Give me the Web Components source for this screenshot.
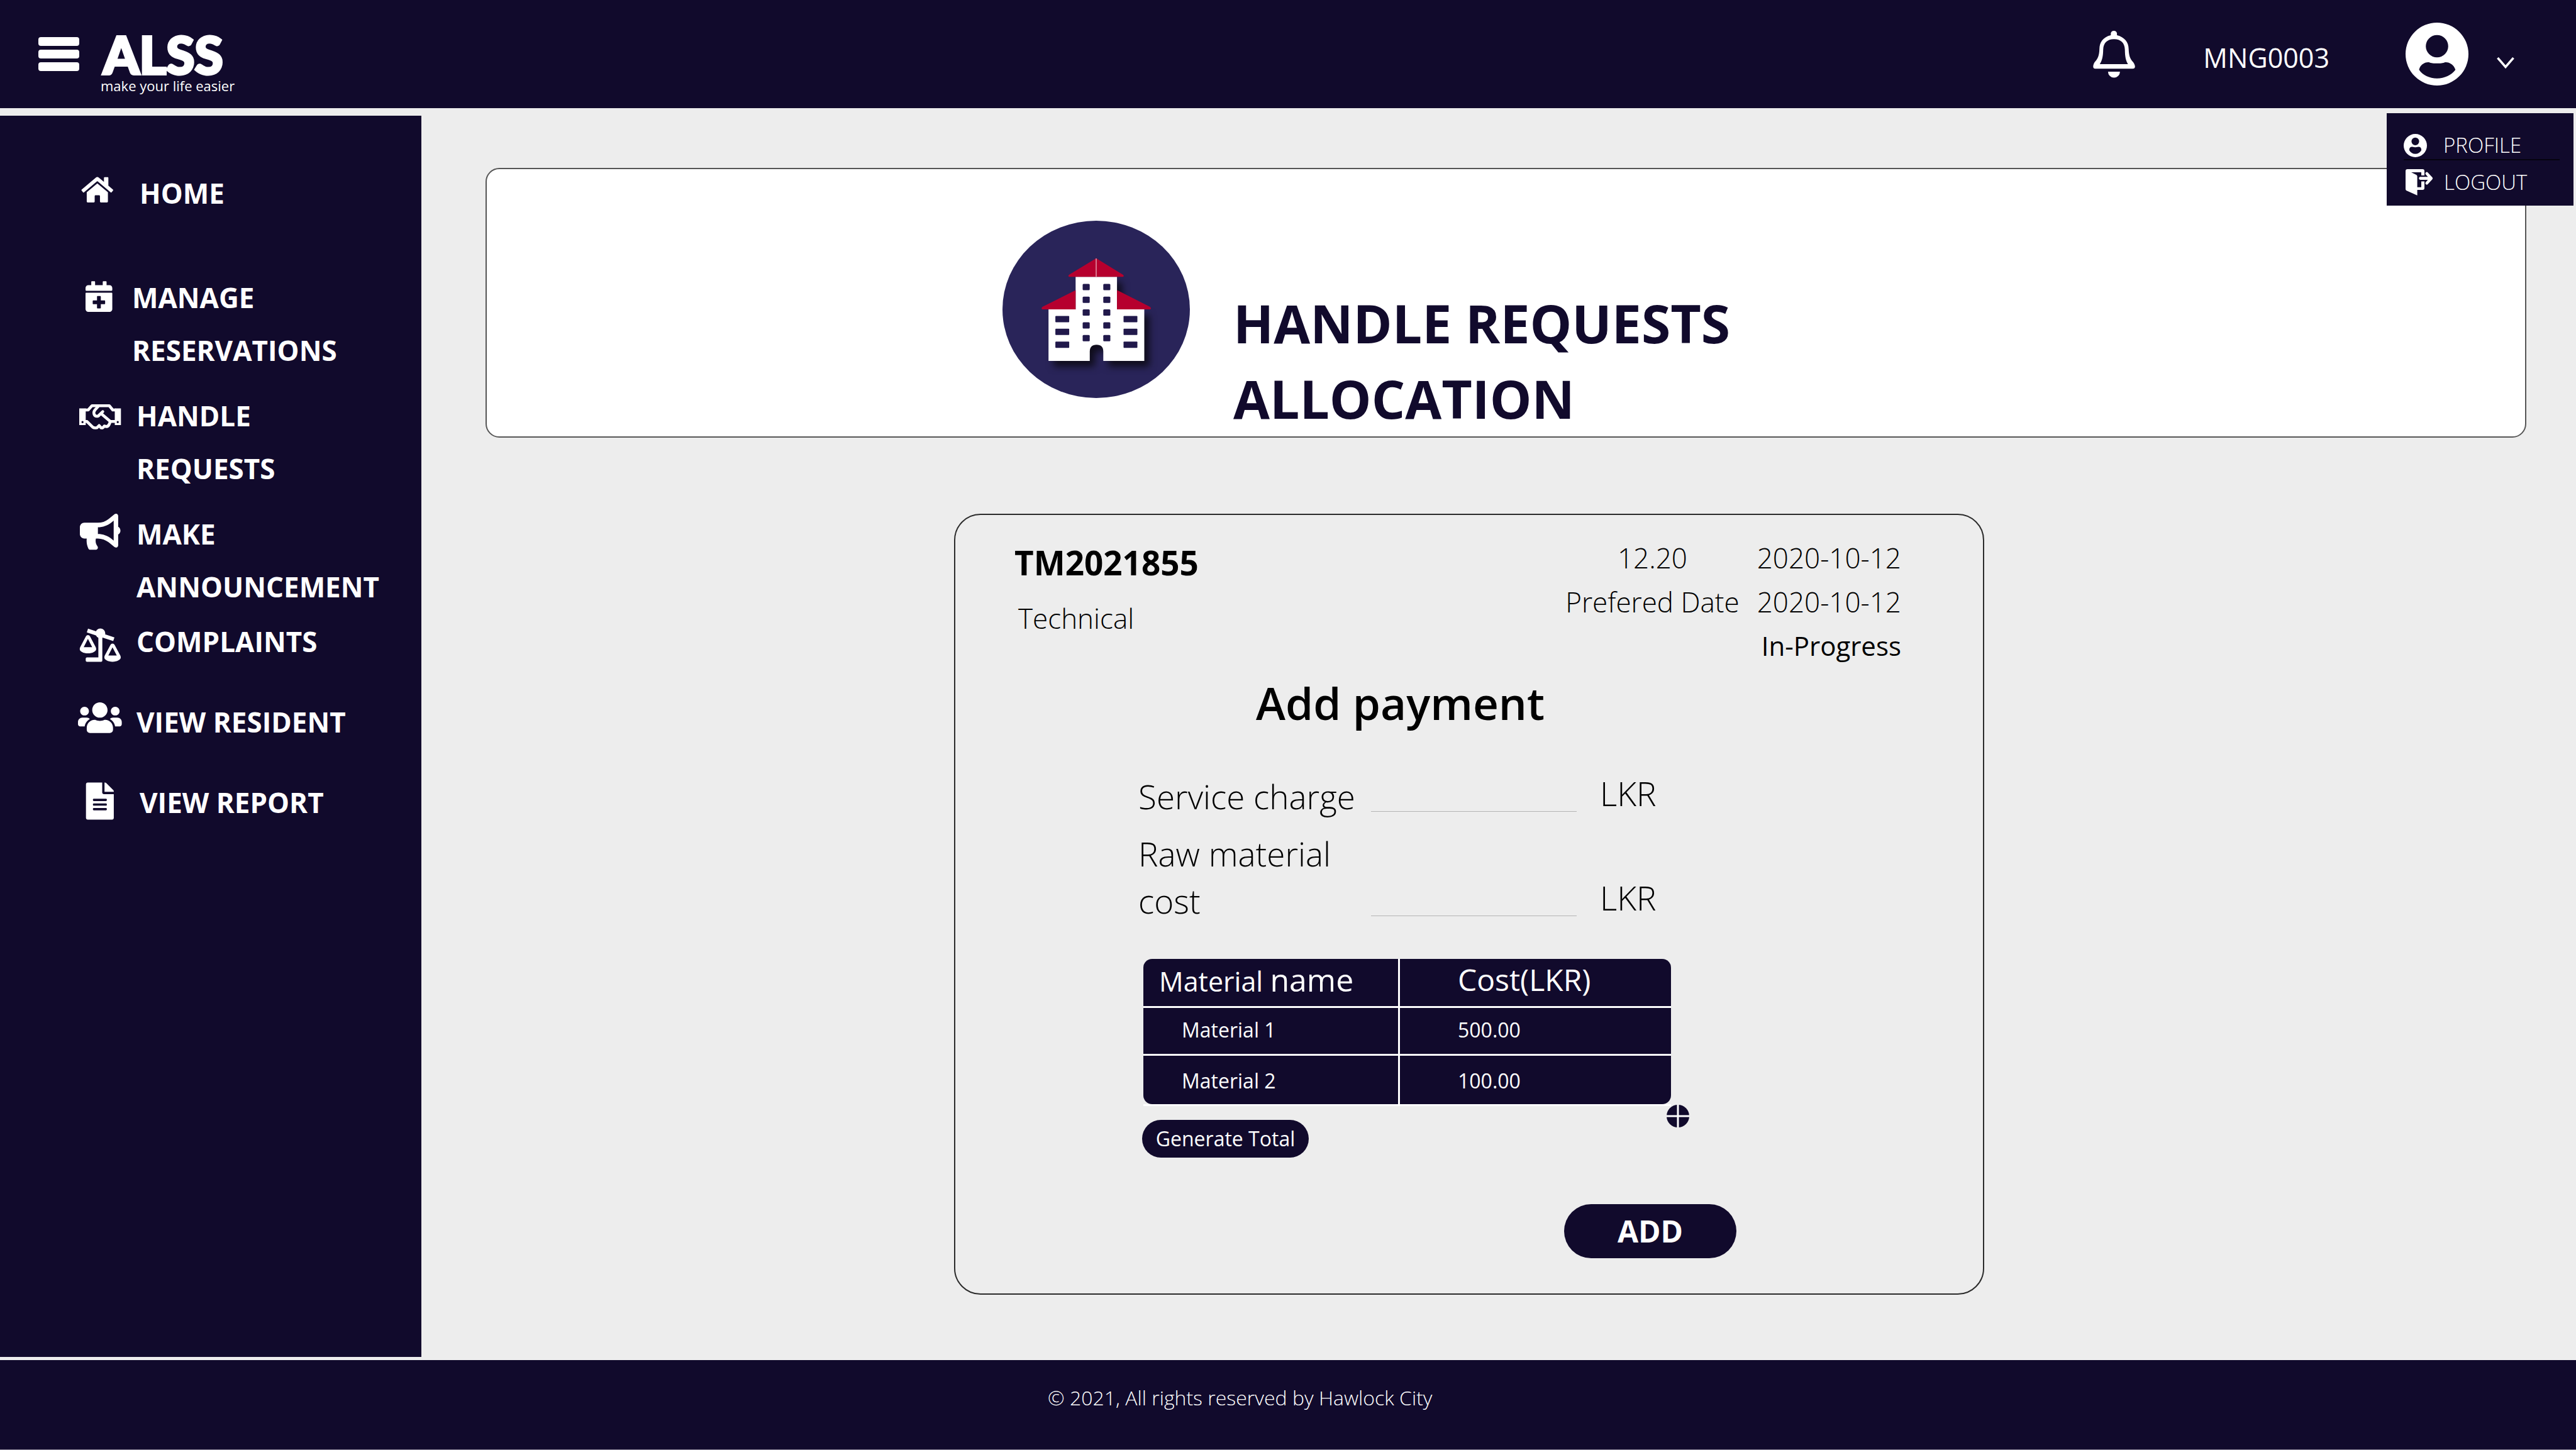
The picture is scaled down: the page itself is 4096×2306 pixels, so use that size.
<!DOCTYPE html>
<html lang="en">
<head>
<meta charset="utf-8">
<meta name="viewport" content="width=device-width, initial-scale=1">
<title>ALSS - Handle Requests</title>
<style>
  :root {
    --navy: #110a2c;
    --canvas: #ededed;
    --line: #2b2b2b;
    --light: 350;
    font-family: "Open Sans", "Noto Sans", sans-serif;
  }
  body { margin: 0; background: var(--canvas); color: #000; }
</style>
</head>
<body>
<alss-app></alss-app>

<script>
const define = (name, html) => {
  const tpl = document.createElement('template');
  tpl.innerHTML = html;
  customElements.define(name, class extends HTMLElement {
    constructor() {
      super();
      this.attachShadow({ mode: 'open' }).append(tpl.content.cloneNode(true));
    }
  });
};

/* Icons: every sidebar icon shares a 70x84 canvas, one text line high. */
const ICONS = {
  menu: [65, 54, '<rect width="65" height="14" rx="4"/><rect y="20" width="65" height="14" rx="4"/><rect y="40" width="65" height="14" rx="4"/>'],
  bell: [67, 76, '<path fill-rule="evenodd" d="M28.3 8V5a5 5 0 0 1 9.8 0v3C50 11 56.7 19 56.7 30c.3 10 2.300 16 7.300 21 2 3 2.800 5 2.800 7s-1.300 3.300-3.800 3.300H3.500C1.500 61.300.300 60 .300 58s.500-4 2.200-7C7.500 46 10 40 10.200 30 10.400 19 16 11 28.300 8zM33.400 14.300C23 14.300 16.500 20 16.200 31 16 42 14.500 48 10.800 54h44.800C52 48 50.900 42 50.700 31 50.400 20 44 14.300 33.400 14.300z"/><path d="M23.900 66h19a9.500 9.500 0 0 1-19 0z"/>'],
  user: [100, 100, '<path fill-rule="evenodd" d="M50 0a50 50 0 1 1 0 100A50 50 0 1 1 50 0zM50 19.700a17.800 17.800 0 1 0 0 35.600 17.800 17.800 0 1 0 0-35.600zM21.500 75C27 83.500 38 88.700 50 88.700S73 83.500 79.300 75C77 67 69 62 62 63.200c-4 2.200-20 2.200-24 0C31 62 23 67 21.500 75z"/>'],
  profile: [37, 37, '<path transform="scale(.37)" fill-rule="evenodd" d="M50 0a50 50 0 1 1 0 100A50 50 0 1 1 50 0zM50 15.500a16.500 16.500 0 1 0 0 33 16.500 16.500 0 1 0 0-33zM24 70c6 10 15 16 26 16s20-6 26-16c0-12-6-15-14-14.500-7 2.500-17 2.500-24 0C30 55 24 58 24 70z"/>'],
  chevron: [28, 18, '<path d="M1.500 1L14 15.500 26.500 1" fill="none" stroke="currentColor" stroke-width="3.500"/>'],
  logout: [44, 42, '<path d="M3 0h24q3 0 3 3v7h-5V5H9l8 4q1.600.800 1.600 2.600v17.200H25V19.400h5v10.500q0 3-3 3h-8.400v8.800L1.200 34Q0 33 0 31.500V3Q0 0 3 0z"/><path d="M23.500 14.600h17M33.800 7l7 7.600-7 7.600" fill="none" stroke="currentColor" stroke-width="4.600" stroke-linecap="round" stroke-linejoin="round"/>'],
  home: [70, 84, '<path transform="translate(5.500 13.800) scale(.0877 .09)" d="M280.370 148.260L96 300.110V464a16 16 0 0 0 16 16l112.060-.290a16 16 0 0 0 15.920-16V368a16 16 0 0 1 16-16h64a16 16 0 0 1 16 16v95.640a16 16 0 0 0 16 16.050L464 480a16 16 0 0 0 16-16V300L295.670 148.260a12.190 12.190 0 0 0-15.300 0zM571.600 251.470L488 182.560V44.050a12 12 0 0 0-12-12h-56a12 12 0 0 0-12 12v72.610L318.470 43a48 48 0 0 0-61 0L4.340 251.470a12 12 0 0 0-1.600 16.900l25.500 31A12 12 0 0 0 45.150 301l235.220-193.740a12.190 12.190 0 0 1 15.300 0L530.900 301a12 12 0 0 0 16.900-1.600l25.500-31a12 12 0 0 0-1.700-16.930z"/>'],
  calendar: [70, 84, '<path transform="translate(12 16.300) scale(.095)" d="M436 160H12c-6.600 0-12-5.400-12-12v-36c0-26.500 21.500-48 48-48h48V12c0-6.600 5.400-12 12-12h40c6.600 0 12 5.400 12 12v52h128V12c0-6.600 5.400-12 12-12h40c6.600 0 12 5.400 12 12v52h48c26.500 0 48 21.500 48 48v36c0 6.600-5.400 12-12 12zM12 192h424c6.600 0 12 5.400 12 12v260c0 26.500-21.500 48-48 48H48c-26.500 0-48-21.500-48-48V204c0-6.600 5.400-12 12-12zm316 140c0-6.600-5.400-12-12-12h-60v-60c0-6.600-5.400-12-12-12h-40c-6.600 0-12 5.400-12 12v60h-60c-6.600 0-12 5.400-12 12v40c0 6.600 5.400 12 12 12h60v60c0 6.600 5.400 12 12 12h40c6.600 0 12-5.400 12-12v-60h60c6.600 0 12-5.400 12-12v-40z"/>'],
  handshake: [70, 84, '<path fill-rule="evenodd" d="M2 30.400h10.300V57H2zM7.200 50.600a1.700 1.700 0 1 0 0 3.400 1.700 1.700 0 1 0 0-3.400zM58.500 30.400h9.800V57h-9.800zM63.200 50.600a1.700 1.700 0 1 0 0 3.400 1.700 1.700 0 1 0 0-3.400z"/><g fill="none" stroke="currentColor" stroke-width="4.600" stroke-linejoin="round"><path d="M11 33h5.200l6-6.700h27.600l5.500 6.700H60M11 51.300h3.300l9.200 9q2 1.500 6.500 1l3.600-3.500 3 3.500q3 1 5.300-2.800l2.500.800q3.500.500 5.400-3.800l1.700-4.200H60"/><path d="M32 27.500l-4.800 5.200q-2.800 3.600-1.500 7.300 2 4.200 6.600 2.500l7.100-6.800M36.500 38.500l14.900 12.800" stroke-linecap="round"/></g>'],
  bullhorn: [70, 84, '<path transform="translate(3 10) scale(.112)" d="M576 240c0-23.630-12.950-44.040-32-55.120V32.010C544 23.260 537.020 0 512 0c-7.120 0-14.190 2.380-19.980 7.020l-85.030 68.030C364.280 109.190 310.660 128 256 128H64c-35.350 0-64 28.650-64 64v96c0 35.350 28.650 64 64 64h33.700c-1.390 10.480-2.180 21.140-2.180 32 0 39.770 9.260 77.350 25.560 110.940 5.190 10.690 16.520 17.060 28.400 17.060h74.280c26.050 0 41.690-29.840 25.900-50.560-16.400-21.520-26.150-48.360-26.150-77.440 0-11.110 1.620-21.790 4.410-32H256c54.660 0 108.280 18.810 150.980 52.950l85.030 68.030a32.023 32.023 0 0 0 19.980 7.020c24.920 0 32-22.780 32-32V295.130C563.050 284.040 576 263.630 576 240zm-96 141.420l-33.050-26.440C392.950 311.780 325.120 288 256 288v-96c69.120 0 136.950-23.780 190.950-66.980L480 98.580v282.840z"/>'],
  scales: [70, 84, '<path d="M15 24.700l42 13.900" stroke="currentColor" stroke-width="6.200"/><circle cx="35.600" cy="29.300" r="7.800"/><path d="M32.400 29h6.300v43.500q0 2-2 2H14.300q-2 0-2-2v-3q0-2 2-2h18.100z"/><g fill-rule="evenodd"><path d="M15.800 32q2.200 0 3.300 2l9.100 17.200q.700 1.500.700 3c0 3.800-5.900 6.800-13.100 6.800s-13-3-13-6.800q0-1.500.700-3L12.600 34q1-2 3.200-2zM15.800 38L9.100 51.200h13.500z"/><path transform="translate(39.100 13.400)" d="M15.800 32q2.200 0 3.300 2l9.100 17.200q.700 1.500.700 3c0 3.800-5.900 6.800-13.100 6.800s-13-3-13-6.800q0-1.500.700-3L12.600 34q1-2 3.200-2zM15.800 38L9.100 51.200h13.500z"/></g>'],
  users: [70, 84, '<path transform="translate(0 7.500) scale(.1088)" d="M96 224c35.300 0 64-28.700 64-64s-28.700-64-64-64-64 28.700-64 64 28.700 64 64 64zm448 0c35.300 0 64-28.700 64-64s-28.700-64-64-64-64 28.700-64 64 28.700 64 64 64zm32 32h-64c-17.600 0-33.500 7.100-45.100 18.600 40.300 22.100 68.900 62 75.100 109.400h66c17.700 0 32-14.300 32-32v-32c0-35.300-28.700-64-64-64zm-256 0c61.900 0 112-50.100 112-112S381.900 32 320 32 208 82.100 208 144s50.100 112 112 112zm76.800 32h-8.300c-20.800 10-43.900 16-68.500 16s-47.600-6-68.500-16h-8.300C179.600 288 128 339.600 128 403.200V432c0 26.500 21.500 48 48 48h288c26.500 0 48-21.500 48-48v-28.800c0-63.600-51.600-115.200-115.200-115.200zm-223.700-13.400C161.500 263.100 145.600 256 128 256H64c-35.300 0-64 28.700-64 64v32c0 17.700 14.300 32 32 32h65.900c6.300-47.400 34.900-87.300 75.200-109.400z"/>'],
  file: [70, 84, '<path transform="translate(12.700 10.500) scale(.1152)" d="M224 136V0H24C10.700 0 0 10.700 0 24v464c0 13.300 10.700 24 24 24h336c13.300 0 24-10.700 24-24V160H248c-13.200 0-24-10.800-24-24zm64 236c0 6.600-5.400 12-12 12H108c-6.600 0-12-5.400-12-12v-8c0-6.600 5.400-12 12-12h168c6.600 0 12 5.400 12 12v8zm0-64c0 6.600-5.400 12-12 12H108c-6.600 0-12-5.400-12-12v-8c0-6.600 5.400-12 12-12h168c6.600 0 12 5.400 12 12v8zm0-72v8c0 6.600-5.400 12-12 12H108c-6.600 0-12-5.400-12-12v-8c0-6.600 5.400-12 12-12h168c6.600 0 12 5.400 12 12zm96-114.100v6.100H256V0h6.100c6.400 0 12.500 2.500 17 7l97.900 98c4.500 4.500 7 10.600 7 16.900z"/>'],
  plus: [36, 36, '<circle cx="18" cy="18" r="18" fill="#110a2c"/><path d="M18 0v36M0 18h36" stroke="#fff" stroke-width="3"/>']
};

customElements.define('alss-icon', class extends HTMLElement {
  connectedCallback() {
    if (this.shadowRoot) return;
    const [w, h, body] = ICONS[this.getAttribute('name')];
    this.attachShadow({ mode: 'open' }).innerHTML =
      `<style>:host{display:block;flex:none}svg{display:block}</style>
       <svg width="${w}" height="${h}" viewBox="0 0 ${w} ${h}" fill="currentColor" aria-hidden="true">${body}</svg>`;
  }
});

/* Round building emblem of the page title. */
customElements.define('alss-emblem', class extends HTMLElement {
  connectedCallback() {
    if (this.shadowRoot) return;
    let win = '';
    for (let i = 0; i < 5; i++)
      for (const x of [127.5, 160.3])
        win += `<rect x="${x}" y="${100.500 + i * 20.3}" width="11.200" height="10" rx="1.500"/>`;
    for (let i = 0; i < 3; i++)
      for (const x of [84.1, 192.5])
        win += `<rect x="${x}" y="${151.400 + i * 20.4}" width="22" height="10" rx="1"/>`;
    this.attachShadow({ mode: 'open' }).innerHTML = `
      <style>:host{display:block;flex:none}svg{display:block}
        .house{filter:drop-shadow(8px 9px 6px rgba(12,10,20,.9))}</style>
      <svg width="298" height="282" viewBox="0 0 298 282" role="img" aria-label="Building">
        <ellipse cx="149" cy="141" rx="149" ry="141" fill="#292459"/>
        <path class="house" fill="#fff" d="M116.300 89.300h65.800v51.600h43.400v82h-65.200v-15q0-10.700-10.700-10.700t-10.800 10.700v15H73.200v-82h43.100z"/>
        <g fill="#b6002e">
          <path d="M149 59.700l42.800 26.300q2 2 0 3.300h-86q-2-1.300 0-3.300z"/>
          <path d="M116.300 110.400v30.500H63q-2-1.800.5-4zM182.100 110.400v30.500h53q2-1.800-.5-4z"/>
        </g>
        <path d="M149 60v29" stroke="#f0c0cc" stroke-width="1.200"/>
        <g fill="#21194b">${win}</g>
      </svg>`;
  }
});

define('alss-user-menu', `
  <style>
    :host { display: block; box-sizing: border-box; width: 297px; padding: 29px 22px 15px 27px;
            background: var(--navy); color: #fff; }
    a { display: flex; align-items: center; gap: 26px; color: inherit; text-decoration: none;
        font-size: 33px; font-weight: var(--light); line-height: 44px; }
    a + a { gap: 17px; margin-top: 13px; padding-left: 3px; }
    a:first-of-type { border-bottom: 2px solid #05030f; }
  </style>
  <a href="#profile"><alss-icon name="profile"></alss-icon>PROFILE</a>
  <a href="#logout"><alss-icon name="logout"></alss-icon>LOGOUT</a>
`);

define('alss-header', `
  <style>
    :host { display: block; position: relative; background: var(--navy); color: #fff; }
    header { display: flex; align-items: center; box-sizing: border-box; height: 172px; padding: 0 98px 0 61px; }
    button { all: unset; display: flex; align-items: center; cursor: pointer; }
    .brand { padding-top: 28px; margin-left: 34px; margin-right: auto; }
    .name { font-family: Lato, "Open Sans", sans-serif; font-size: 82px; font-weight: 900; line-height: 72px;
            -webkit-text-stroke: 4px #fff; padding-left: 4px; }
    .tag { font-size: 22px; line-height: 28px; }
    .id { margin: 0 121px 0 108px; padding-top: 12px; font-size: 43px; line-height: 60px; }
    .account { gap: 45px; }
    .account alss-icon + alss-icon { margin-top: 28px; }
    alss-user-menu { position: absolute; top: 180px; right: 4px; z-index: 2; }
  </style>
  <header>
    <button type="button" aria-label="Menu"><alss-icon name="menu"></alss-icon></button>
    <div class="brand"><div class="name">ALSS</div><div class="tag">make your life easier</div></div>
    <button type="button" aria-label="Notifications"><alss-icon name="bell"></alss-icon></button>
    <span class="id">MNG0003</span>
    <button type="button" class="account" aria-label="Account">
      <alss-icon name="user"></alss-icon><alss-icon name="chevron"></alss-icon>
    </button>
  </header>
  <alss-user-menu></alss-user-menu>
`);

customElements.define('alss-nav-item', class extends HTMLElement {
  connectedCallback() {
    if (this.shadowRoot) return;
    this.attachShadow({ mode: 'open' }).innerHTML = `
      <style>
        :host { display: block; }
        a { display: flex; gap: 23px; color: #fff; text-decoration: none;
            font-size: 44px; font-weight: 700; line-height: 84px; }
        :host([tight]) a { gap: 16px; }
        :host([wide]) a { gap: 28px; }
      </style>
      <a href="${this.getAttribute('href')}"><alss-icon name="${this.getAttribute('icon')}"></alss-icon><span><slot></slot></span></a>`;
  }
});

define('alss-sidebar', `
  <style>
    :host { display: block; background: var(--navy); }
    nav { display: flex; flex-direction: column; padding: 81px 50px 80px 124px; }
    .a { margin-top: 82px; }
    .b { margin-top: 20px; }
    .c { margin-top: 3px; }
    .d { margin-top: 44px; }
  </style>
  <nav>
    <alss-nav-item wide icon="home" href="#home">HOME</alss-nav-item>
    <alss-nav-item class="a" tight icon="calendar" href="#reservations">MANAGE<br>RESERVATIONS</alss-nav-item>
    <alss-nav-item class="b" icon="handshake" href="#requests">HANDLE<br>REQUESTS</alss-nav-item>
    <alss-nav-item class="b" icon="bullhorn" href="#announcement">MAKE<br>ANNOUNCEMENT</alss-nav-item>
    <alss-nav-item class="c" icon="scales" href="#complaints">COMPLAINTS</alss-nav-item>
    <alss-nav-item class="d" icon="users" href="#resident">VIEW RESIDENT</alss-nav-item>
    <alss-nav-item class="d" wide icon="file" href="#report">VIEW REPORT</alss-nav-item>
  </nav>
`);

define('alss-page-title', `
  <style>
    :host { display: flex; gap: 69px; padding: 82px 0 0 820px; background: #fff;
            border: 2px solid #555; border-radius: 22px; }
    h1 { margin: 103px 0 0; max-width: 900px; color: var(--navy);
         font-size: 84px; font-weight: 700; line-height: 120px; }
  </style>
  <alss-emblem></alss-emblem>
  <h1><slot></slot></h1>
`);

define('alss-request-info', `
  <style>
    :host { display: flex; justify-content: space-between; }
    h2 { margin: 0; font-size: 53px; font-weight: 700; line-height: 86px; }
    p { margin: 0; padding-left: 6px; font-size: 44px; font-weight: var(--light); line-height: 90px; }
    .meta { display: grid; grid-template-columns: auto auto; column-gap: 28px;
            font-size: 44px; font-weight: var(--light); line-height: 70px; text-align: right; }
    .time { text-align: center; }
    .status { grid-column: 1 / -1; font-size: 42px; font-weight: 400; }
  </style>
  <div><h2>TM2021855</h2><p>Technical</p></div>
  <div class="meta">
    <span class="time">12.20</span><span>2020-10-12</span>
    <span>Prefered Date</span><span>2020-10-12</span>
    <span class="status">In-Progress</span>
  </div>
`);

customElements.define('alss-amount-field', class extends HTMLElement {
  connectedCallback() {
    if (this.shadowRoot) return;
    this.attachShadow({ mode: 'open' }).innerHTML = `
      <style>
        :host { display: grid; grid-template-columns: 370px 327px auto; align-items: end;
                justify-content: start; font-size: 53px; font-weight: var(--light); line-height: 75px; }
        input { box-sizing: border-box; width: 100%; height: 60px; margin: 0 0 13px; padding: 0 8px;
                border: 0; border-bottom: 1px solid #b4b4b4; background: none; outline: none;
                font: inherit; font-size: 43px; line-height: 59px; }
        .unit { margin: 0 0 5px 37px; }
      </style>
      <label for="amount">${this.getAttribute('label')}</label>
      <input id="amount" type="text" inputmode="decimal">
      <span class="unit">LKR</span>`;
  }
});

define('alss-material-table', `
  <style>
    :host { display: block; position: relative; width: 839px; }
    .frame { color: #fff; border-bottom: 3px solid #fff; }
    table { width: 100%; background: var(--navy); border-radius: 14px;
            border-collapse: separate; border-spacing: 0; table-layout: fixed; }
    th, td { box-sizing: border-box; padding: 0; text-align: left; vertical-align: top; font-weight: 400;
             border-bottom: 3px solid #fff; }
    th:first-child, td:first-child { width: 408px; border-right: 3px solid #fff; }
    th { height: 78px; font-size: 43px; line-height: 66px; padding-left: 25px; }
    th big { font-size: 50px; }
    th:last-child { font-size: 48px; padding-left: 92px; }
    td { height: 76px; font-size: 32px; line-height: 70px; padding-left: 61px; }
    td:last-child { padding-left: 92px; }
    tr:last-child td { height: 77px; padding-top: 5px; border-bottom: 0; }
    thead tr:last-child th { border-bottom: 3px solid #fff; }
    button { all: unset; position: absolute; right: -29px; bottom: -34px; cursor: pointer; }
  </style>
  <div class="frame">
    <table>
      <thead><tr><th scope="col">Material <big>name</big></th><th scope="col">Cost(LKR)</th></tr></thead>
      <tbody>
        <tr><td>Material 1</td><td>500.00</td></tr>
        <tr><td>Material 2</td><td>100.00</td></tr>
      </tbody>
    </table>
  </div>
  <button type="button" aria-label="Add material"><alss-icon name="plus"></alss-icon></button>
`);

define('alss-payment-card', `
  <style>
    :host { display: block; box-sizing: border-box; max-width: 1638px; padding: 33px 130px 56px 94px;
            border: 2px solid var(--line); border-radius: 42px; }
    h2 { margin: 8px 0 0 384px; font-size: 71px; font-weight: 600; line-height: 96px; }
    form { display: flex; flex-direction: column; align-items: flex-start; padding: 58px 0 0 197px; }
    alss-amount-field + alss-amount-field { margin-top: 16px; }
    alss-material-table { margin: 55px 0 0 8px; }
    button { border: 0; padding: 0; background: var(--navy); color: #fff; font-family: inherit; cursor: pointer; }
    .total { width: 265px; margin: 22px 0 0 6px; border-radius: 30px; font-size: 32px; line-height: 60px; }
    .add { width: 274px; margin: 74px 0 0 677px; border-radius: 43px; font-size: 48px; font-weight: 700; line-height: 86px; }
  </style>
  <alss-request-info></alss-request-info>
  <h2>Add payment</h2>
  <form>
    <alss-amount-field label="Service charge"></alss-amount-field>
    <alss-amount-field label="Raw material cost"></alss-amount-field>
    <alss-material-table></alss-material-table>
    <button type="button" class="total">Generate Total</button>
    <button type="button" class="add">ADD</button>
  </form>
`);

define('alss-footer', `
  <style>
    :host { display: block; background: var(--navy); color: #fff; border-bottom: 1px solid #8f8a9c; }
    p { margin: 0; padding: 38px 0 60px 1666px; font-size: 32px; font-weight: var(--light); line-height: 44px; }
  </style>
  <footer><p>© 2021, All rights reserved by Hawlock City</p></footer>
`);

define('alss-app', `
  <style>
    :host { display: grid; grid-template-rows: auto 1fr auto; min-height: 100vh; }
    .body { display: grid; grid-template-columns: 670px 1fr; margin: 12px 0 5px; }
    main { padding: 83px 79px 0 102px; }
    alss-payment-card { margin: 121px 0 0 745px; }
  </style>
  <alss-header></alss-header>
  <div class="body">
    <alss-sidebar></alss-sidebar>
    <main>
      <alss-page-title>HANDLE REQUESTS<br>ALLOCATION</alss-page-title>
      <alss-payment-card></alss-payment-card>
    </main>
  </div>
  <alss-footer></alss-footer>
`);
</script>
</body>
</html>
